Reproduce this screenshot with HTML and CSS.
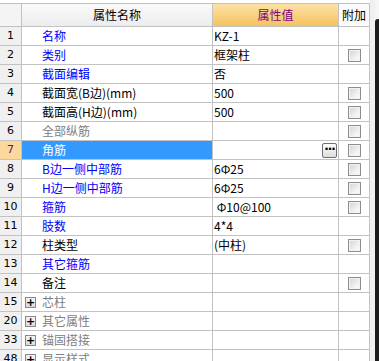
FILE: index.html
```html
<!DOCTYPE html>
<html lang="zh">
<head>
<meta charset="utf-8">
<link rel="stylesheet" href="styles.css">
</head>
<body>
<div class="page">
  <div class="grid">
    <div class="hd num"></div>
    <div class="hd name-h">属性名称</div>
    <div class="hd val-h">属性值</div>
    <div class="hd add-h">附加</div>

    <div class="num">1</div><div class="name blue">名称</div><div class="val">KZ-1</div><div class="add"></div>
    <div class="num">2</div><div class="name blue">类别</div><div class="val">框架柱</div><div class="add"><span class="cb"></span></div>
    <div class="num">3</div><div class="name blue">截面编辑</div><div class="val">否</div><div class="add"></div>
    <div class="num">4</div><div class="name">截面宽(B边)(mm)</div><div class="val">500</div><div class="add"><span class="cb"></span></div>
    <div class="num">5</div><div class="name">截面高(H边)(mm)</div><div class="val">500</div><div class="add"><span class="cb"></span></div>
    <div class="num">6</div><div class="name gray">全部纵筋</div><div class="val"></div><div class="add"><span class="cb"></span></div>
    <div class="num sel-num">7</div><div class="name sel">角筋</div><div class="val edit"><span class="dots">···</span></div><div class="add"><span class="cb"></span></div>
    <div class="num">8</div><div class="name blue">B边一侧中部筋</div><div class="val">6Φ25</div><div class="add"><span class="cb"></span></div>
    <div class="num">9</div><div class="name blue">H边一侧中部筋</div><div class="val">6Φ25</div><div class="add"><span class="cb"></span></div>
    <div class="num">10</div><div class="name blue">箍筋</div><div class="val">&nbsp;Φ10@100</div><div class="add"><span class="cb"></span></div>
    <div class="num">11</div><div class="name blue">肢数</div><div class="val">4*4</div><div class="add"></div>
    <div class="num">12</div><div class="name">柱类型</div><div class="val">(中柱)</div><div class="add"><span class="cb"></span></div>
    <div class="num">13</div><div class="name blue">其它箍筋</div><div class="val"></div><div class="add"></div>
    <div class="num">14</div><div class="name">备注</div><div class="val"></div><div class="add"><span class="cb"></span></div>
    <div class="num">15</div><div class="name group"><span class="plus">+</span>芯柱</div><div class="val"></div><div class="add"></div>
    <div class="num">20</div><div class="name group"><span class="plus">+</span>其它属性</div><div class="val"></div><div class="add"></div>
    <div class="num">33</div><div class="name group"><span class="plus">+</span>锚固搭接</div><div class="val"></div><div class="add"></div>
    <div class="num">48</div><div class="name group"><span class="plus">+</span>显示样式</div><div class="val"></div><div class="add"></div>
  </div>
  <div class="strip"></div>
  <div class="side"><div class="dark"></div></div>
</div>
</body>
</html>
```

FILE: styles.css
```css
html, body {
  margin: 0;
  padding: 0;
  background: #ffffff;
  overflow: hidden;
}
body {
  width: 379px;
  height: 361px;
  font-family: "Noto Sans CJK SC", "DejaVu Sans", sans-serif;
  font-size: 12px;
  color: #000;
}
.page {
  display: flex;
  align-items: flex-start;
  height: 361px;
}
.grid {
  margin-top: 3px;
  width: 369px;
  padding: 1px 1px 0 0;
  display: grid;
  grid-template-columns: 21px 190px 125px 30px;
  grid-auto-rows: 18px;
  grid-template-rows: 22px;
  gap: 1px;
  background: #c2c2c2;
  flex-shrink: 0;
}
.grid > div {
  background: #fff;
  line-height: 18px;
  white-space: nowrap;
  overflow: hidden;
}
.hd {
  line-height: 22px !important;
}
.grid > .num {
  background: #f0f0f0;
  text-align: center;
  font-family: "DejaVu Sans", sans-serif;
  font-size: 11px;
}
.grid > .hd.num {
  background: #f4f4f4;
}
.grid > .name-h {
  background: linear-gradient(#fafafa, #ececec);
  text-align: center;
  font-size: 12px;
}
.grid > .val-h {
  background: linear-gradient(#fde2a6, #f5c25f);
  color: #800080;
  text-align: center;
}
.grid > .add-h {
  background: #fbfbfb;
  text-align: center;
}
.name {
  padding-left: 20px;
}
.blue {
  color: #0000ff;
}
.gray {
  color: #808080;
}
.grid > .sel {
  background: #3399ff;
  color: #ffffff;
}
.grid > .sel-num {
  background: #fdd89d;
  color: #800080;
}
.val {
  padding-left: 1px;
}
.edit {
  display: flex;
  justify-content: flex-end;
  align-items: center;
  padding-right: 1px;
}
.dots {
  width: 13px;
  height: 13px;
  border: 1px solid #707070;
  border-radius: 2px;
  background: linear-gradient(#ffffff, #dcdcdc);
  font-size: 12px;
  font-weight: bold;
  line-height: 11px;
  text-align: center;
  letter-spacing: -1px;
  color: #000;
  font-family: "DejaVu Sans", sans-serif;
}
.add {
  display: flex;
  justify-content: center;
  align-items: center;
}
.cb {
  width: 11px;
  height: 11px;
  margin-left: 1px;
  border: 1px solid #8e8e8e;
  background: linear-gradient(135deg, #d4d4d4, #f8f8f8 80%);
  box-shadow: inset 0 0 0 1px #f2f2f2;
}
.group {
  padding-left: 3px;
  color: #808080;
  display: flex;
  align-items: center;
}
.plus {
  width: 9px;
  height: 9px;
  border: 1px solid #888;
  background: linear-gradient(#f4f4f4, #dcdcdc);
  color: #000;
  font-family: "DejaVu Sans", sans-serif;
  font-size: 11px;
  font-weight: bold;
  line-height: 9px;
  text-align: center;
  margin-right: 6px;
}
.strip {
  width: 5px;
  height: 361px;
  background: #f0f0f0;
  flex-shrink: 0;
}
.side {
  width: 5px;
  height: 361px;
  background: #f5f5f5;
  padding-top: 19px;
  box-sizing: border-box;
  flex-shrink: 0;
}
.dark {
  height: 100%;
  background: #1c1c1c;
  border-top-left-radius: 3px;
}
```
